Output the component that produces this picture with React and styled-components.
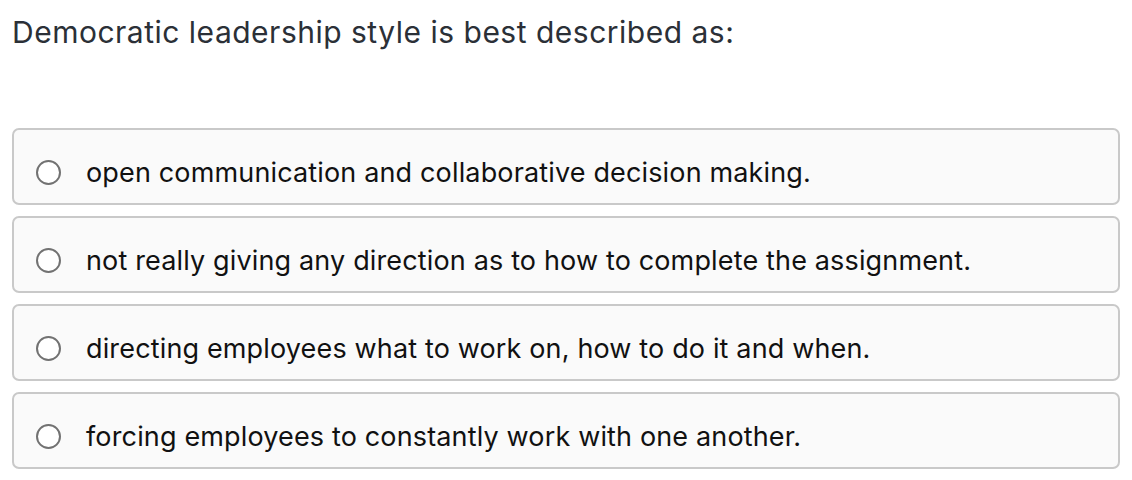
import React from 'react';
import styled, { createGlobalStyle } from 'styled-components';

const GlobalStyle = createGlobalStyle`
  * {
    box-sizing: border-box;
  }
  body {
    margin: 0;
    background: #ffffff;
    font-family: Inter, "Liberation Sans", sans-serif;
  }
`;

const Page = styled.div`
  padding: 11px 12px 0 12px;
  width: 1132px;
`;

const Question = styled.h2`
  margin: 0;
  font-size: 30px;
  font-weight: 400;
  letter-spacing: 0.5px;
  color: #2b3037;
  line-height: 42px;
`;

const Options = styled.div`
  display: flex;
  flex-direction: column;
  gap: 11px;
  margin-top: 75px;
`;

const Option = styled.label`
  display: flex;
  align-items: center;
  height: 77px;
  padding: 12px 22px 0 22px;
  background: #fafafa;
  border: 2px solid #c9c9c9;
  border-radius: 7px;
  cursor: pointer;
`;

const Radio = styled.span`
  width: 25px;
  height: 25px;
  border: 2px solid #727272;
  border-radius: 50%;
  flex-shrink: 0;
  background: #fff;
`;

const OptionText = styled.span`
  margin-left: 25px;
  font-size: 27px;
  line-height: 27px;
  letter-spacing: 0.15px;
  color: #111;
`;

const answers = [
  'open communication and collaborative decision making.',
  'not really giving any direction as to how to complete the assignment.',
  'directing employees what to work on, how to do it and when.',
  'forcing employees to constantly work with one another.',
];

export default function App() {
  return (
    <Page>
      <GlobalStyle />
      <Question>Democratic leadership style is best described as:</Question>
      <Options>
        {answers.map((a) => (
          <Option key={a}>
            <Radio />
            <OptionText>{a}</OptionText>
          </Option>
        ))}
      </Options>
    </Page>
  );
}
